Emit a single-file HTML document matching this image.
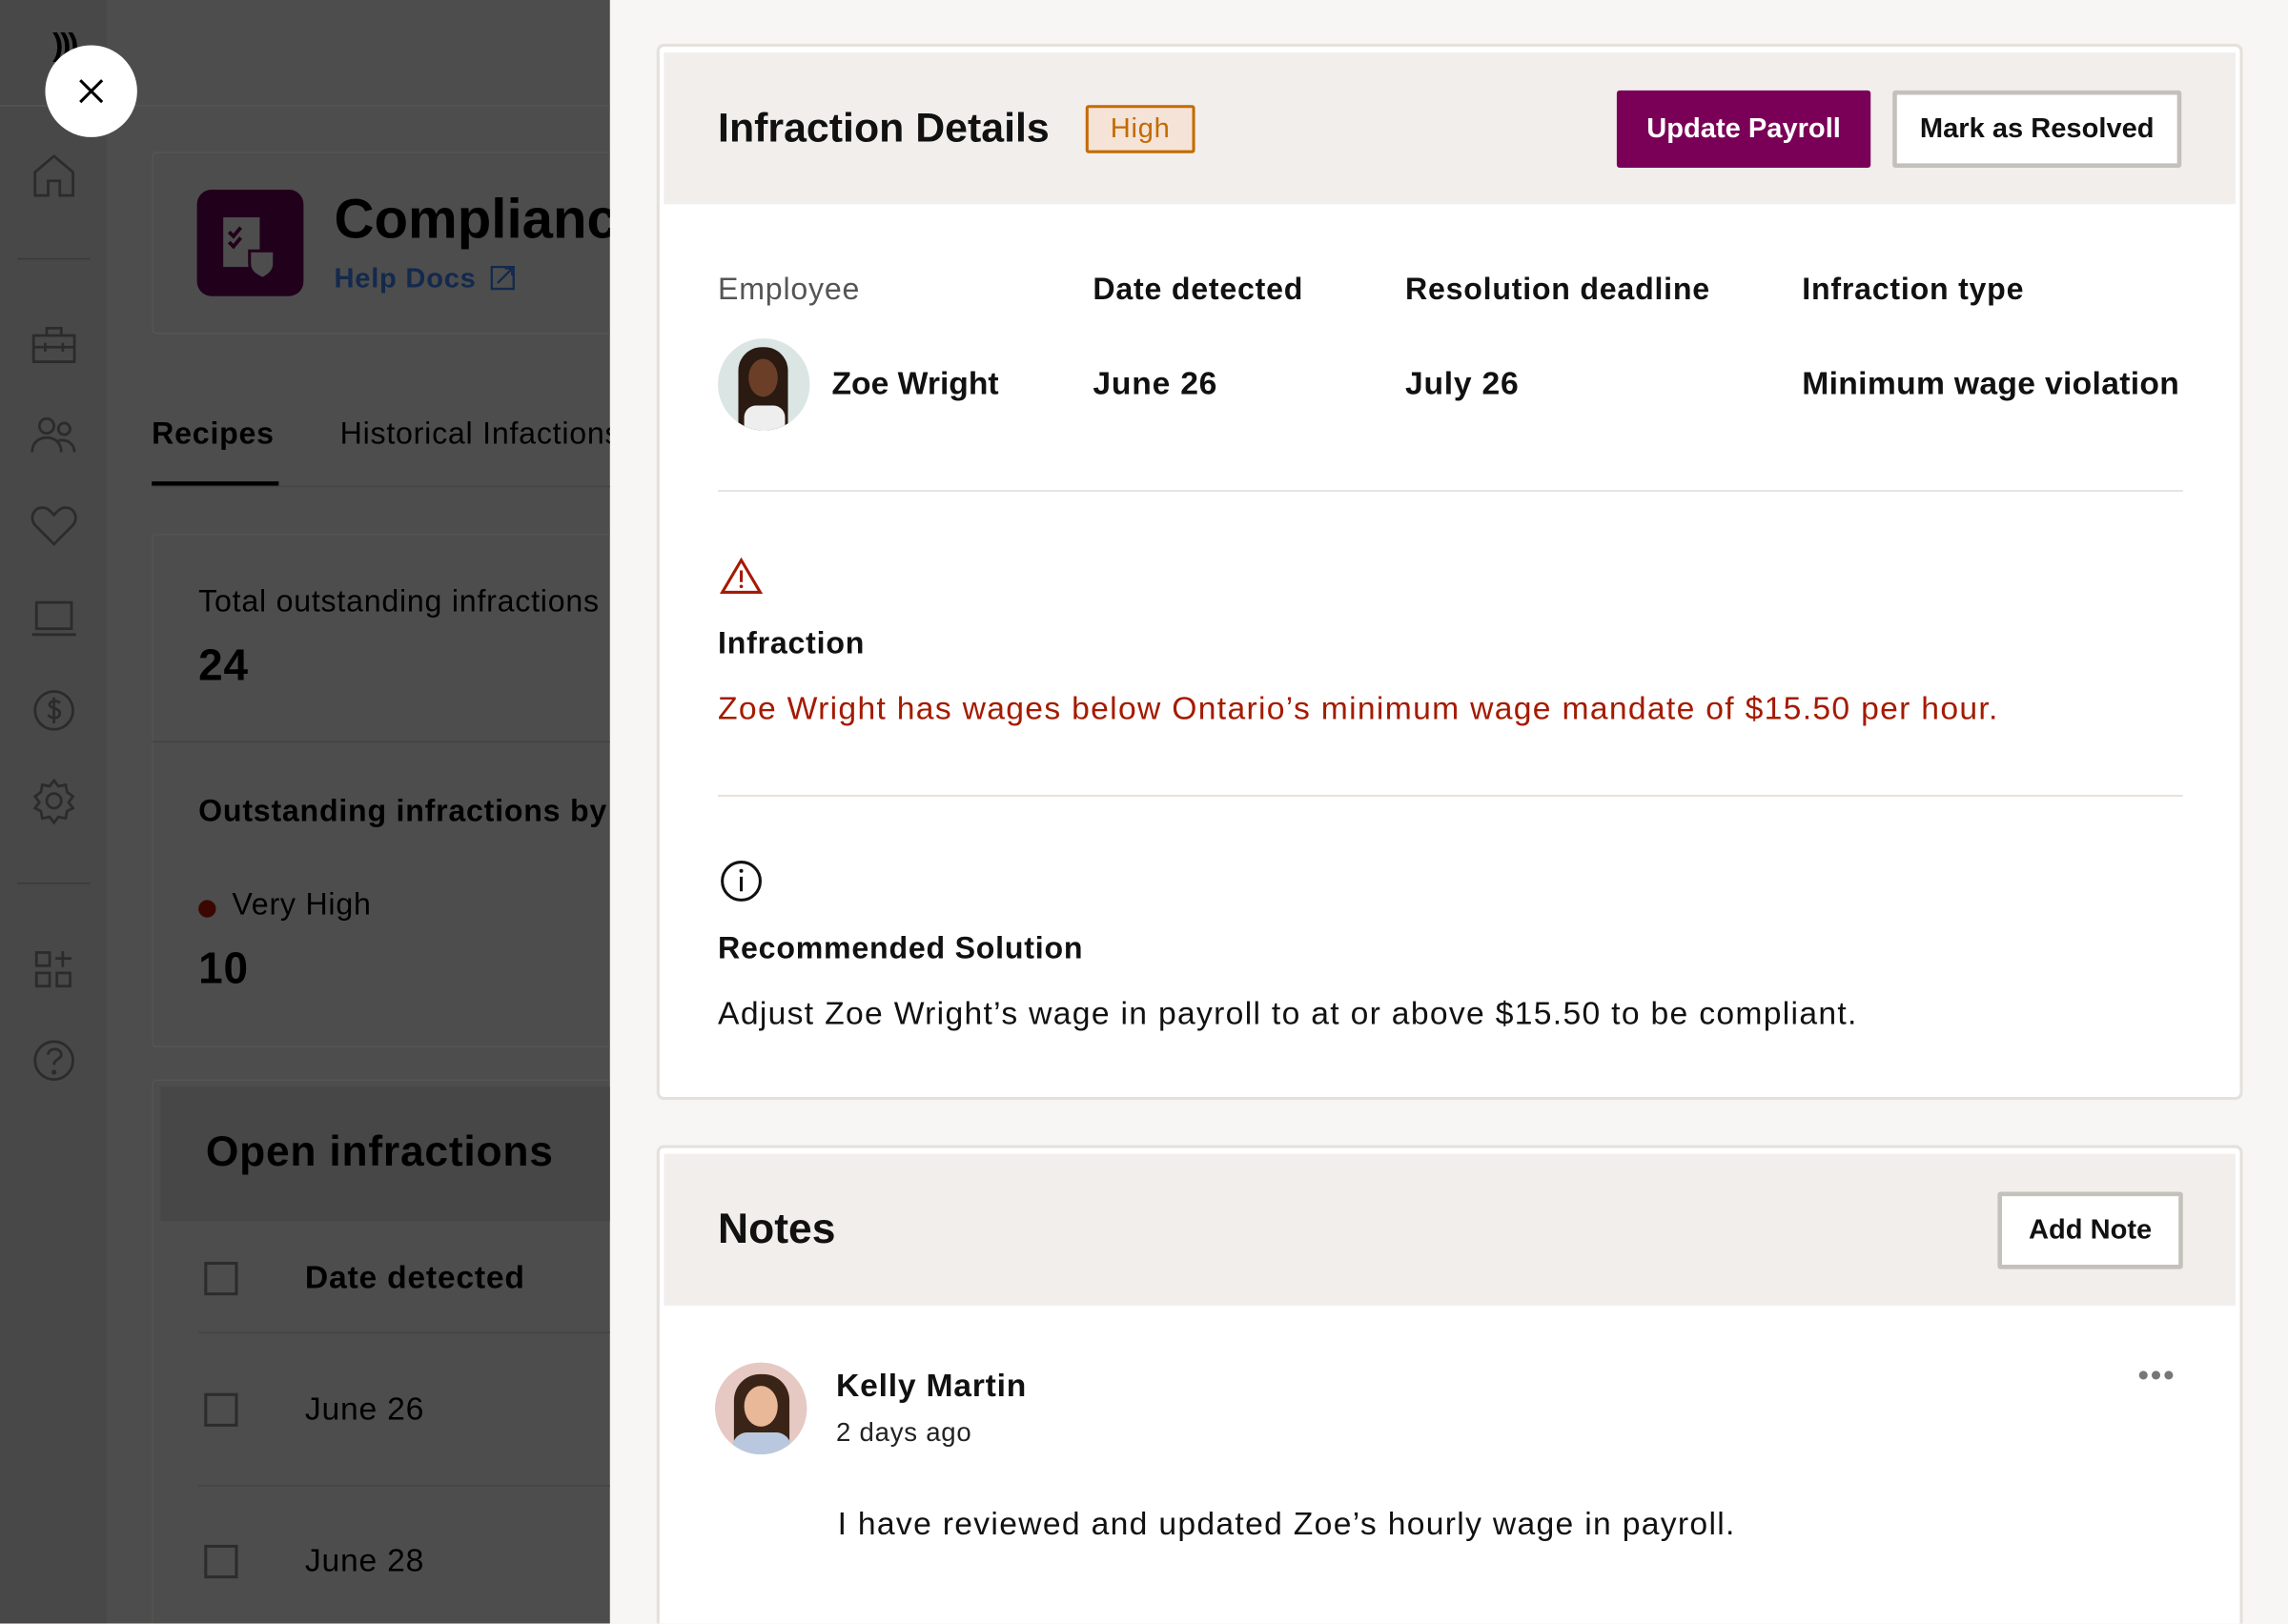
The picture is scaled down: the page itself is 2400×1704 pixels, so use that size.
<!DOCTYPE html>
<html><head><meta charset="utf-8"><style>
*{box-sizing:border-box;margin:0;padding:0}
html,body{width:2400px;height:1704px;overflow:hidden;background:#f7f6f4}
body{font-family:"Liberation Sans",sans-serif}
#w{position:absolute;left:0;top:0;width:1568px;height:1113px;transform:scale(1.5306);transform-origin:0 0;overflow:hidden;letter-spacing:0.5px}
.a{position:absolute}
.left{left:0;top:0;width:418px;height:1113px;background:#4d4d4d;overflow:hidden}
.side{left:0;top:0;width:73px;height:1113px;background:#484848}
.ic{position:absolute;left:20px;width:34px;height:34px}
.ic svg{width:34px;height:34px;fill:none;stroke:#2b2b2b;stroke-width:1.8}
.card{background:#fff;border:2px solid #e4e0dc;border-radius:5px}
.hd{background:#f1eeeb}
.t{color:#111}
</style></head><body><div id="w">
<div class="a left">
 <div class="a side"></div>
 <div class="a" style="left:0;top:72px;width:418px;height:1px;background:#555"></div>
 <div class="a" style="left:36px;top:18px;font-size:22px;font-weight:bold;color:#000;letter-spacing:-2px">)))</div>
 <div class="ic" style="top:104px"><svg viewBox="0 0 34 34"><path d="M4 30V14L17 3 30 14V30H21V20H13V30Z"/></svg></div>
 <div class="a" style="left:12px;top:177px;width:50px;height:1px;background:#3a3a3a"></div>
 <div class="ic" style="top:220px"><svg viewBox="0 0 34 34"><rect x="3" y="10" width="28" height="18"/><path d="M12 10V5h10v5M3 18h28M11 15v6M23 15v6"/></svg></div>
 <div class="ic" style="top:282px"><svg viewBox="0 0 34 34"><circle cx="12" cy="10" r="5"/><circle cx="24" cy="12" r="4"/><path d="M2 28c0-7 5-10 10-10s10 3 10 10M20 20c6-1 11 2 11 8"/></svg></div>
 <div class="ic" style="top:344px"><svg viewBox="0 0 34 34"><path d="M17 29L4 16C0 11 3 4 9 4c4 0 6 3 8 5 2-2 4-5 8-5 6 0 9 7 5 12Z"/></svg></div>
 <div class="ic" style="top:407px"><svg viewBox="0 0 34 34"><rect x="5" y="6" width="24" height="18"/><path d="M2 28h30"/></svg></div>
 <div class="ic" style="top:470px"><svg viewBox="0 0 34 34"><circle cx="17" cy="17" r="13"/><path d="M21 12c-1-2-7-2-7 1s7 2 7 6-6 4-8 1M17 8v18"/></svg></div>
 <div class="ic" style="top:532px"><svg viewBox="0 0 34 34"><circle cx="17" cy="17" r="5"/><path d="M17 3l3 4 5-1 1 5 4 3-3 4 3 4-4 2-1 5-5-1-3 4-3-4-5 1-1-5-4-2 3-4-3-4 4-3 1-5 5 1Z"/></svg></div>
 <div class="a" style="left:12px;top:605px;width:50px;height:1px;background:#3a3a3a"></div>
 <div class="ic" style="top:648px"><svg viewBox="0 0 34 34"><rect x="5" y="5" width="9" height="9"/><rect x="5" y="19" width="9" height="9"/><rect x="19" y="19" width="9" height="9"/><path d="M23 4v11M18 9h11"/></svg></div>
 <div class="ic" style="top:710px"><svg viewBox="0 0 34 34"><circle cx="17" cy="17" r="13"/><path d="M13 13c0-5 9-5 9 0 0 3-5 3-5 7"/><circle cx="17" cy="25" r=".8"/></svg></div>
 <div class="a" style="left:104px;top:104px;width:340px;height:125px;border:1px solid #555;border-radius:3px"></div>
 <div class="a" style="left:135px;top:130px;width:73px;height:73px;background:#21001b;border-radius:10px">
  <svg width="73" height="73" viewBox="0 0 73 73"><rect x="18" y="19" width="25" height="34" fill="#4d4d4d"/><path d="M22 29l3 3 5-6M22 36l3 3 5-6" stroke="#21001b" stroke-width="2.5" fill="none"/><path d="M36 42h17v9c0 5-4 8-8 10-5-2-9-5-9-10Z" fill="#4d4d4d" stroke="#21001b" stroke-width="2"/></svg>
 </div>
 <div class="a t" style="left:229px;top:130px;font-size:38px;color:#000;white-space:nowrap;font-weight:bold;letter-spacing:0">Compliance</div>
 <div class="a" style="left:229px;top:181px;font-size:19px;color:#13294d;font-weight:bold">Help Docs <svg width="17" height="17" viewBox="0 0 17 17" style="vertical-align:-2px;margin-left:4px"><path d="M1 1h15v15H1ZM5 12L15 2M10 2h5v5" fill="none" stroke="#13294d" stroke-width="1.5"/></svg></div>
 <div class="a" style="left:104px;top:286px;font-size:21px;color:#000;font-weight:bold">Recipes</div>
 <div class="a" style="left:233px;top:286px;font-size:21px;color:#000;white-space:nowrap">Historical Infactions</div>
 <div class="a" style="left:104px;top:330px;width:87px;height:3px;background:#000"></div>
 <div class="a" style="left:104px;top:333px;width:320px;height:1px;background:#444"></div>
 <div class="a" style="left:104px;top:366px;width:340px;height:352px;border:1px solid #555;border-radius:3px"></div>
 <div class="a" style="left:104px;top:508px;width:320px;height:1px;background:#444"></div>
 <div class="a" style="left:136px;top:401px;font-size:21px;color:#000;white-space:nowrap">Total outstanding infractions</div>
 <div class="a" style="left:136px;top:440px;font-size:30px;color:#000;font-weight:bold">24</div>
 <div class="a" style="left:136px;top:545px;font-size:21px;color:#000;font-weight:bold;white-space:nowrap">Outstanding infractions by</div>
 <div class="a" style="left:136px;top:617px;width:12px;height:12px;border-radius:50%;background:#3a0800"></div>
 <div class="a" style="left:159px;top:609px;font-size:21px;color:#000">Very High</div>
 <div class="a" style="left:136px;top:648px;font-size:30px;color:#000;font-weight:bold">10</div>
 <div class="a" style="left:104px;top:740px;width:340px;height:400px;border:1px solid #555;border-radius:3px"></div>
 <div class="a" style="left:110px;top:745px;width:320px;height:92px;background:#474747"></div>
 <div class="a" style="left:141px;top:774px;font-size:29px;color:#000;font-weight:bold">Open infractions</div>
 <div class="a" style="left:140px;top:865px;width:23px;height:23px;border:2px solid #2c2c2c"></div>
 <div class="a" style="left:209px;top:863px;font-size:22px;color:#000;font-weight:bold">Date detected</div>
 <div class="a" style="left:136px;top:913px;width:290px;height:1px;background:#444"></div>
 <div class="a" style="left:140px;top:955px;width:23px;height:23px;border:2px solid #2c2c2c"></div>
 <div class="a" style="left:209px;top:953px;font-size:22px;color:#000">June 26</div>
 <div class="a" style="left:136px;top:1018px;width:290px;height:1px;background:#444"></div>
 <div class="a" style="left:140px;top:1059px;width:23px;height:23px;border:2px solid #2c2c2c"></div>
 <div class="a" style="left:209px;top:1057px;font-size:22px;color:#000">June 28</div>
 <div class="a" style="left:31px;top:31px;width:63px;height:63px;border-radius:50%;background:#fff"><svg width="63" height="63" viewBox="0 0 63 63"><path d="M24 24l15 15M39 24L24 39" stroke="#000" stroke-width="2"/></svg></div>
</div>

<div class="a card" style="left:450px;top:30px;width:1087px;height:724px">
 <div class="a hd" style="left:3px;top:4px;width:1077px;height:104px"></div>
 <div class="a t" style="left:40px;top:40px;font-size:28px;white-space:nowrap;font-weight:bold;letter-spacing:0">Infraction Details</div>
 <div class="a" style="left:292px;top:40px;width:75px;height:33px;border:2px solid #c46a00;background:#f4e3d6;border-radius:2px;color:#c46a00;font-size:19px;text-align:center;line-height:29px">High</div>
 <div class="a" style="left:656px;top:30px;width:174px;height:53px;background:#7a0057;border-radius:2px;color:#fff;font-size:19px;font-weight:bold;text-align:center;line-height:53px;letter-spacing:0">Update Payroll</div>
 <div class="a" style="left:845px;top:30px;width:198px;height:53px;border:3px solid #c4c0bc;background:#fff;border-radius:2px;color:#111;font-size:19px;font-weight:bold;text-align:center;line-height:47px;letter-spacing:0">Mark as Resolved</div>
 <div class="a" style="left:40px;top:155px;font-size:21px;color:#555">Employee</div>
 <div class="a t" style="left:297px;top:155px;font-size:21px;font-weight:bold">Date detected</div>
 <div class="a t" style="left:511px;top:155px;font-size:21px;font-weight:bold">Resolution deadline</div>
 <div class="a t" style="left:783px;top:155px;font-size:21px;font-weight:bold">Infraction type</div>
 <div class="a" style="left:40px;top:200px;width:63px;height:63px;border-radius:50%;background:#dbe6e4;overflow:hidden"><div style="position:absolute;left:14px;top:6px;width:34px;height:58px;border-radius:16px 16px 0 0;background:#2a1a12"></div><div style="position:absolute;left:21px;top:14px;width:20px;height:26px;border-radius:50%;background:#6b3e28"></div><div style="position:absolute;left:18px;top:46px;width:28px;height:20px;background:#eee;border-radius:8px 8px 0 0"></div></div>
 <div class="a t" style="left:118px;top:218px;font-size:22px;font-weight:bold;letter-spacing:0">Zoe Wright</div>
 <div class="a t" style="left:297px;top:218px;font-size:22px;font-weight:bold">June 26</div>
 <div class="a t" style="left:511px;top:218px;font-size:22px;font-weight:bold">July 26</div>
 <div class="a t" style="left:783px;top:218px;font-size:22px;font-weight:bold;white-space:nowrap;letter-spacing:0.2px">Minimum wage violation</div>
 <div class="a" style="left:40px;top:304px;width:1004px;height:1px;background:#ddd"></div>
 <svg class="a" style="left:41px;top:350px" width="30" height="26" viewBox="0 0 30 26"><path d="M15 2L28 24H2Z" fill="none" stroke="#a51a00" stroke-width="2"/><path d="M15 9v8" stroke="#a51a00" stroke-width="2"/><circle cx="15" cy="20" r="1.2" fill="#a51a00"/></svg>
 <div class="a t" style="left:40px;top:398px;font-size:21px;font-weight:bold">Infraction</div>
 <div class="a" style="left:40px;top:441px;font-size:22px;color:#a51a00;white-space:nowrap;letter-spacing:0.85px">Zoe Wright has wages below Ontario’s minimum wage mandate of $15.50 per hour.</div>
 <div class="a" style="left:40px;top:513px;width:1004px;height:1px;background:#e6d6cc"></div>
 <svg class="a" style="left:41px;top:557px" width="30" height="30" viewBox="0 0 30 30"><circle cx="15" cy="15" r="13" fill="none" stroke="#111" stroke-width="2"/><path d="M15 12v10" stroke="#111" stroke-width="2"/><circle cx="15" cy="8" r="1.3" fill="#111"/></svg>
 <div class="a t" style="left:40px;top:607px;font-size:21px;font-weight:bold">Recommended Solution</div>
 <div class="a t" style="left:40px;top:650px;font-size:22px;white-space:nowrap;letter-spacing:0.85px">Adjust Zoe Wright’s wage in payroll to at or above $15.50 to be compliant.</div>
</div>

<div class="a card" style="left:450px;top:785px;width:1087px;height:360px">
 <div class="a hd" style="left:3px;top:4px;width:1077px;height:104px"></div>
 <div class="a t" style="left:40px;top:40px;font-size:29px;font-weight:bold;letter-spacing:0">Notes</div>
 <div class="a" style="left:917px;top:30px;width:127px;height:53px;border:3px solid #c4c0bc;background:#fff;border-radius:2px;color:#111;font-size:19px;font-weight:bold;text-align:center;line-height:47px;letter-spacing:0">Add Note</div>
 <div class="a" style="left:38px;top:147px;width:63px;height:63px;border-radius:50%;background:#e6c9c3;overflow:hidden"><div style="position:absolute;left:13px;top:8px;width:38px;height:50px;border-radius:18px 18px 4px 4px;background:#3a2418"></div><div style="position:absolute;left:20px;top:16px;width:23px;height:28px;border-radius:50%;background:#e8b898"></div><div style="position:absolute;left:12px;top:48px;width:40px;height:18px;background:#b9c8de;border-radius:10px 10px 0 0"></div></div>
 <div class="a t" style="left:121px;top:150px;font-size:22px;font-weight:bold">Kelly Martin</div>
 <div class="a t" style="left:121px;top:185px;font-size:18px;color:#222">2 days ago</div>
 <div class="a" style="left:1013px;top:143px;font-size:22px;color:#777;letter-spacing:1px">•••</div>
 <div class="a t" style="left:122px;top:245px;font-size:22px;white-space:nowrap;letter-spacing:0.85px">I have reviewed and updated Zoe’s hourly wage in payroll.</div>
</div>
</div></body></html>
